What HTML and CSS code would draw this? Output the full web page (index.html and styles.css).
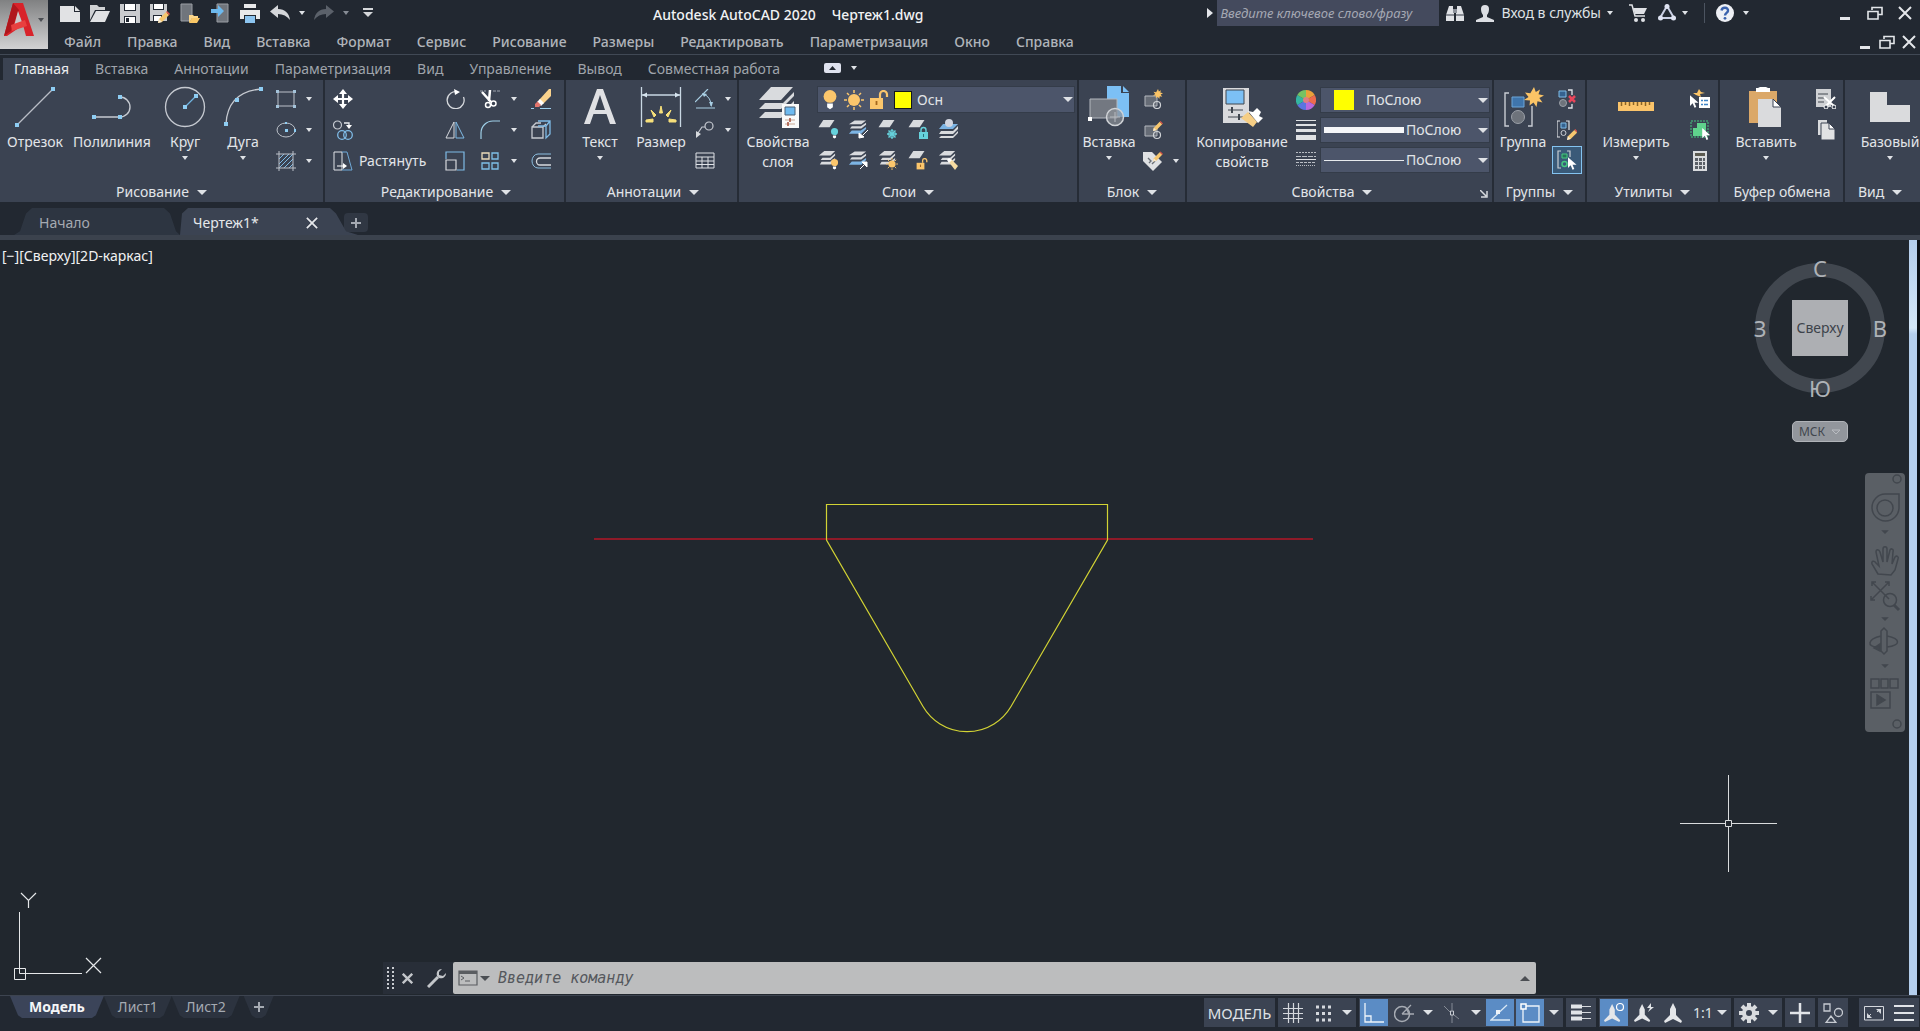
FILE: index.html
```html
<!DOCTYPE html>
<html lang="ru">

<head>
    <meta charset="UTF-8">
    <meta name="viewport" content="width=device-width, initial-scale=1.0">
    <title>Autodesk AutoCAD 2020 - Чертеж1.dwg</title>
    <link rel="stylesheet" href="styles.css">
</head>

<body>
    <!-- Shared icon shapes -->
    <svg class="sprite" aria-hidden="true">
        <symbol id="sheet" viewBox="0 0 10 5">
            <path d="M3 0H10L7 4.500H0Z" fill="#d9dbde" />
        </symbol>
        <symbol id="stack" viewBox="0 0 20 20">
            <path d="M7 1H19L14 6H1ZM5 8.500 3 11H14L19 6V4L13.500 8.500ZM4 13 2 16H14L19 11V9L13.500 13Z" fill="#d9dbde" />
        </symbol>
        <symbol id="stack-blue" viewBox="0 0 20 20">
            <path d="M7 1H19L14 5H1ZM4 7 2 9.500H14L19 5.500V3.500L13.500 7Z" fill="#d9dbde" />
            <path d="M4 11.500 1 15H14L19 10V8L13.500 11.500Z" fill="#7cb4e4" />
        </symbol>
        <symbol id="bulb" viewBox="0 0 10 14">
            <circle cx="5" cy="4.500" r="4.500" />
            <path d="M3 9.500H7V12L5 13.500 3 12Z" fill="#fff" />
        </symbol>
        <symbol id="sun" viewBox="0 0 20 20">
            <circle cx="10" cy="10" r="6" fill="#fbc66c" />
            <path d="M10 0V3M10 17V20M0 10H3M17 10H20M3 3 5 5M15 15 17 17M3 17 5 15M15 5 17 3" stroke="#fbc66c" stroke-width="1.500" />
        </symbol>
        <symbol id="unlock" viewBox="0 0 20 20">
            <path d="M1 8H14V19H1Z" fill="#fbc66c" />
            <path d="M11 8V4.500A3.500 3.500 0 0 1 18 4.500V7" fill="none" stroke="#fbc66c" stroke-width="2.200" />
            <path d="M7.500 11V15" stroke="#a5661c" stroke-width="1.800" />
        </symbol>
        <symbol id="pencil" viewBox="0 0 12 12">
            <path d="M0 12 1 8 8 1 11 4 4 11Z" fill="#f6c76f" />
            <path d="M8 1 9 0 12 3 11 4Z" fill="#e05548" />
            <path d="M0 12 1 8 4 11Z" fill="#f7ead0" />
        </symbol>
        <symbol id="pointer" viewBox="0 0 10 14">
            <path d="M0 0V12L3 9 5 14 7 13 5 8.500H9.500Z" fill="#fff" />
        </symbol>
        <symbol id="burst" viewBox="0 0 20 20">
            <path d="M10 0 11.800 5 16 2.500 14.500 7.200 20 8.500 15.300 11 18.500 15.500 13.500 14.300 12.500 20 9.500 15.500 5.500 18.500 6 13.500 0 13 4.500 10 1 5.500 6.300 6.300Z" fill="#fbc466" />
        </symbol>
        <symbol id="restore" viewBox="0 0 16 14">
            <path d="M5 4V1.500H15V8.500H11M1 5.500H11V13H1Z" fill="none" stroke="#e4e6ea" stroke-width="1.600" />
        </symbol>
        <symbol id="cross" viewBox="0 0 14 14">
            <path d="M1 1 13 13M13 1 1 13" stroke="currentColor" stroke-width="2" />
        </symbol>
        <symbol id="cross-bold" viewBox="0 0 14 14">
            <path d="M1 1 13 13M13 1 1 13" stroke="currentColor" stroke-width="3" />
        </symbol>
        <symbol id="plus" viewBox="0 0 10 10">
            <path d="M5 0V10M0 5H10" stroke="currentColor" stroke-width="2" />
        </symbol>
        <symbol id="annot" viewBox="0 0 20 20">
            <path d="M9 0 12 6V12L18 18 17 20 9 16 1 20 0 18 6 12V6Z" fill="#e4e6e9" />
        </symbol>
    </svg>

    <!-- Title bar and menu -->
    <header class="header">
        <button class="app-button" aria-label="Меню приложения">
            <svg width="30" height="36" viewBox="0 0 30 36">
                <path d="M9 1H19L30 34H22L19 23 3 34H0Z" fill="#d8232a" />
                <path d="M9 1 0 34 7 29 15 8Z" fill="#b0161c" />
                <path d="M14 9 18 20 10 24Z" fill="#c9c9ca" />
                <path d="M7 23 21 18 23 24 8 29Z" fill="#e8403f" />
            </svg>
            <span class="caret caret-dark"></span>
        </button>
        <div class="header-rows">
            <div class="title-row">
                <div class="quick-access">
                    <button aria-label="Создать"><svg class="ic" viewBox="0 0 20 20"><path d="M0 3H14V9H20V19H0Z" fill="#e1e2e4" /><path d="M15 3 20 8H15Z" fill="#e1e2e4" /></svg></button>
                    <button aria-label="Открыть"><svg class="ic" viewBox="0 0 20 20"><path d="M0 2H7L9 4H15V7H5L0 17Z" fill="#cfd1d4" /><path d="M6 8H20L15 19H0Z" fill="#e1e2e4" /></svg></button>
                    <button aria-label="Сохранить"><svg class="ic" viewBox="0 0 20 20"><path d="M0 1H20V20H0Z" fill="#c9cbce" /><path d="M4 1H16V8H4ZM4 13H16V20H4Z" fill="#222933" /><path d="M5 1H15V7H5ZM5 14H15V20H5Z" fill="#fff" /><path d="M6 15H9V19H6Z" fill="#222933" /></svg></button>
                    <button aria-label="Сохранить как"><svg class="ic" viewBox="0 0 20 20"><path d="M0 1H17V18H0Z" fill="#c9cbce" /><path d="M3 1H14V7H3ZM3 12H12V18H3Z" fill="#222933" /><path d="M4 1H13V6H4ZM4 13H11V18H4Z" fill="#fff" /><use href="#pencil" x="8" y="8" width="12" height="12" /></svg></button>
                    <button aria-label="Открыть из облака"><svg class="ic" viewBox="0 0 20 20"><path d="M1 1H12V18H1Z" fill="#70757c" stroke="#9a9ea4" /><path d="M9 12H13L14 13H18V15H12L9 20Z" fill="#fbd68a" /><path d="M12 15H20L17 20H9Z" fill="#f9c766" /></svg></button>
                    <button aria-label="Сохранить в облаке"><svg class="ic" viewBox="0 0 20 20"><path d="M7 1H18V19H7Z" fill="#70757c" stroke="#9a9ea4" /><path d="M1 6H8V2L14 8 8 14V10H1Z" fill="#6db9ee" /></svg></button>
                    <button aria-label="Печать"><svg class="ic" viewBox="0 0 20 20"><path d="M4 1H16V5H4ZM0 7H20V16H16V12H4V16H0Z" fill="#e8e9eb" /><path d="M5 13H15V20H5Z" fill="#8cc4f0" /></svg></button>
                    <button aria-label="Отменить"><svg class="ic" viewBox="0 0 20 20"><path d="M0 8.500 8 2V6C15 6 19 10 20 17 17 13 13 11 8 11V15Z" fill="#d5d7da" /></svg></button>
                    <button class="narrow" aria-label="Список отмен"><span class="caret"></span></button>
                    <button aria-label="Повторить"><svg class="ic" viewBox="0 0 20 20"><path d="M20 8.500 12 2V6C5 6 1 10 0 17 3 13 7 11 12 11V15Z" fill="#5b616a" /></svg></button>
                    <button class="narrow" aria-label="Список повторов"><span class="caret caret-dim"></span></button>
                    <button class="narrow qa-custom" aria-label="Настройка панели"><svg width="10" height="10" viewBox="0 0 10 10"><path d="M0 1H10" stroke="#d5d7da" stroke-width="2" /><path d="M0 4H10L5 9Z" fill="#d5d7da" /></svg></button>
                </div>
                <h1 class="title"><span>Autodesk AutoCAD 2020</span><span>Чертеж1.dwg</span></h1>
                <div class="info-center">
                    <button class="collapse" aria-label="Свернуть поиск"><svg width="6" height="10" viewBox="0 0 6 10"><path d="M0 0 6 5 0 10Z" fill="#e4e6ea" /></svg></button>
                    <input class="search" type="text" aria-label="Поиск" placeholder="Введите ключевое слово/фразу">
                    <button class="wide" aria-label="Найти"><svg class="ic" viewBox="0 0 20 20"><path d="M4 3H8V8L9 10V18H1V12ZM12 3H16L19 12V18H11V10L12 8Z" fill="#dfe1e5" /><path d="M8 6H12V10H8Z" fill="#8b9099" /><path d="M1 12H9M11 12H19" stroke="#343b47" /></svg></button>
                    <button class="sign-in"><svg class="ic" viewBox="0 0 20 20"><path d="M6 6A4 4 0 0 1 14 6C14 9 13 11 12 12V14L19 17V19H1V17L8 14V12C7 11 6 9 6 6Z" fill="#dcdee3" /></svg>Вход в службы<span class="caret"></span></button>
                    <button class="wide cart" aria-label="App Store"><svg class="ic" viewBox="0 0 20 20"><path d="M1 2H4L7 13H17" fill="none" stroke="#dfe1e5" stroke-width="1.500" /><path d="M5 5H19L16 11H7Z" fill="#dfe1e5" /><circle cx="8" cy="17" r="2" fill="#dfe1e5" /><circle cx="15" cy="17" r="2" fill="#dfe1e5" /></svg></button>
                    <button class="wide" aria-label="Autodesk App"><svg class="ic" viewBox="0 0 20 20"><path d="M10 3 3 15H17Z" fill="none" stroke="#c9cfe3" stroke-width="2" /><circle cx="10" cy="3.500" r="2.500" fill="#dfe3f2" /><circle cx="3.500" cy="15" r="2.500" fill="#dfe3f2" /><circle cx="16.500" cy="15" r="2.500" fill="#dfe3f2" /></svg><span class="caret"></span></button>
                    <button class="help" aria-label="Справка"><svg class="ic" viewBox="0 0 20 20"><circle cx="10" cy="10" r="9" fill="#eef0f5" /><path d="M6.500 7.500C7 3.500 13.500 4 13 7.800 12.700 9.800 10 10 10 12.500" fill="none" stroke="#3a62ad" stroke-width="2.400" /><circle cx="10" cy="15.300" r="1.400" fill="#3a62ad" /></svg><span class="caret"></span></button>
                    <div class="window-buttons">
                        <button aria-label="Свернуть"><span class="minimize"></span></button>
                        <button aria-label="Восстановить"><svg width="16" height="14"><use href="#restore" /></svg></button>
                        <button aria-label="Закрыть"><svg width="14" height="14"><use href="#cross" /></svg></button>
                    </div>
                </div>
            </div>
            <div class="menu-row">
                <nav class="menu">
                    <a href="#">Файл</a>
                    <a href="#">Правка</a>
                    <a href="#">Вид</a>
                    <a href="#">Вставка</a>
                    <a href="#">Формат</a>
                    <a href="#">Сервис</a>
                    <a href="#">Рисование</a>
                    <a href="#">Размеры</a>
                    <a href="#">Редактировать</a>
                    <a href="#">Параметризация</a>
                    <a href="#">Окно</a>
                    <a href="#">Справка</a>
                </nav>
                <div class="window-buttons doc-buttons">
                    <button aria-label="Свернуть чертеж"><span class="minimize"></span></button>
                    <button aria-label="Восстановить чертеж"><svg width="16" height="14"><use href="#restore" /></svg></button>
                    <button aria-label="Закрыть чертеж"><svg width="14" height="14"><use href="#cross" /></svg></button>
                </div>
            </div>
        </div>
    </header>

    <!-- Ribbon tabs -->
    <nav class="ribbon-tabs">
        <a class="active" href="#">Главная</a>
        <a href="#">Вставка</a>
        <a href="#">Аннотации</a>
        <a href="#">Параметризация</a>
        <a href="#">Вид</a>
        <a href="#">Управление</a>
        <a href="#">Вывод</a>
        <a href="#">Совместная работа</a>
        <button class="ribbon-min" aria-label="Свернуть ленту"><svg width="17" height="10" viewBox="0 0 17 10"><rect width="17" height="10" rx="2" fill="#dfe2ee" /><path d="M5 7 8.500 3 12 7Z" fill="#222831" /></svg><span class="caret"></span></button>
    </nav>

    <!-- Ribbon -->
    <div class="ribbon">
        <section class="panel panel-draw">
            <div class="panel-body">
                <button class="tool w70">
                    <svg class="ic-lg" viewBox="0 0 42 42"><path d="M3 39 39 3" stroke="#b9bec6" stroke-width="1.300" /><path d="M1 37H5V41H1ZM37 1H41V5H37Z" fill="#8ecdf3" /></svg>
                    Отрезок
                </button>
                <button class="tool w84">
                    <svg class="ic-lg" viewBox="0 0 42 42"><path d="M3 31H29A10 10 0 0 0 29 11" fill="none" stroke="#c6cad1" stroke-width="1.400" /><path d="M1 29H5V33H1ZM27 29H31V33H27ZM27 9H31V13H27Z" fill="#8ecdf3" /></svg>
                    Полилиния
                </button>
                <button class="tool w62">
                    <svg class="ic-lg" viewBox="0 0 42 42"><circle cx="21" cy="21" r="19.500" fill="none" stroke="#c6cad1" stroke-width="1.300" /><path d="M21 21 32 10" stroke="#6fb4e0" stroke-width="1.300" /><path d="M19 19H23V23H19ZM30 8H34V12H30Z" fill="#8ecdf3" /></svg>
                    Круг<span class="caret"></span>
                </button>
                <button class="tool w54">
                    <svg class="ic-lg" viewBox="0 0 42 42"><path d="M4 38C5 18 16 5 39 3" fill="none" stroke="#c6cad1" stroke-width="1.300" /><path d="M2 36H6V40H2ZM13 12H17V16H13ZM37 1H41V5H37Z" fill="#8ecdf3" /></svg>
                    Дуга<span class="caret"></span>
                </button>
                <div class="small-grid cols-2">
                    <button aria-label="Прямоугольник"><svg class="ic" viewBox="0 0 20 20"><path d="M2 3H18V17H2Z" fill="none" stroke="#bcc1c9" /><path d="M0 1H3V4H0ZM17 1H20V4H17ZM17 16H20V19H17ZM0 16H3V19H0Z" fill="#a4c3da" /></svg></button>
                    <button aria-label="Ещё прямоугольники"><span class="caret"></span></button>
                    <button aria-label="Эллипс"><svg class="ic" viewBox="0 0 20 20"><ellipse cx="10" cy="10" rx="9" ry="7" fill="none" stroke="#bcc1c9" /><path d="M9 9H12V12H9ZM9 2H11V4H9ZM18 9H20V12H18Z" fill="#8ecdf3" /></svg></button>
                    <button aria-label="Ещё эллипсы"><span class="caret"></span></button>
                    <button aria-label="Штриховка"><svg class="ic" viewBox="0 0 20 20"><path d="M3 8 8 3M3 13 13 3M3 17 17 3M8 17 17 8M13 17 17 13" stroke="#7fbbe6" /><path d="M3 0V20M17 0V20M0 3H20M0 17H20" stroke="#bcc1c9" /></svg></button>
                    <button aria-label="Ещё штриховки"><span class="caret"></span></button>
                </div>
            </div>
            <h2 class="panel-title">Рисование<span class="caret caret-lg"></span></h2>
        </section>

        <section class="panel panel-edit">
            <div class="panel-body">
                <div class="small-grid cols-edit">
                    <button class="labeled" aria-label="Перенести"><svg class="ic" viewBox="0 0 20 20"><path d="M10 3V17M3 10H17" stroke="#fff" stroke-width="2.200" /><path d="M10 0 14 5H6ZM10 20 6 15H14ZM0 10 5 6V14ZM20 10 15 14V6Z" fill="#fff" /></svg></button>
                    <button aria-label="Повернуть"><svg class="ic" viewBox="0 0 20 20"><path d="M13 3A8.500 8.500 0 1 0 18.500 8" fill="none" stroke="#d7dade" stroke-width="1.300" /><path d="M9 0 15 3 10 6Z" fill="#fff" /></svg></button>
                    <button aria-label="Обрезать"><svg class="ic" viewBox="0 0 20 20"><path d="M0 2H6M13 2H20" stroke="#9ea4ae" stroke-dasharray="3 1" /><path d="M2 3 11 13M10 1 9 12" stroke="#fff" stroke-width="2.500" /><circle cx="8" cy="16" r="2.500" fill="none" stroke="#fff" stroke-width="1.500" /><circle cx="13.500" cy="14.500" r="2.500" fill="none" stroke="#fff" stroke-width="1.500" /></svg></button>
                    <button aria-label="Ещё обрезка"><span class="caret"></span></button>
                    <button aria-label="Стереть"><svg class="ic" viewBox="0 0 20 20"><path d="M8 11 18 0H20V7L12 15Z" fill="#fad28c" /><path d="M6 13 9 10 13 14 10 17Z" fill="#fff" /><path d="M4 15 6.500 12.500 10 16 8 18H4Z" fill="#e2746c" /><path d="M0 19.500H3M9 19.500H20" stroke="#9fd0f0" /></svg></button>

                    <button class="labeled" aria-label="Копировать"><svg class="ic" viewBox="0 0 20 20"><circle cx="4.500" cy="5" r="4" fill="none" stroke="#c6cad1" stroke-width="1.200" /><path d="M11 3H16V6" fill="none" stroke="#e9ebee" stroke-width="1.300" /><path d="M13 5H19L16 9Z" fill="#fff" /><circle cx="9" cy="15" r="4.300" fill="none" stroke="#7fbbe6" stroke-width="1.300" /><circle cx="15" cy="15" r="4.300" fill="none" stroke="#7fbbe6" stroke-width="1.300" /></svg></button>
                    <button aria-label="Зеркало"><svg class="ic" viewBox="0 0 20 20"><path d="M9 2V18H1Z" fill="none" stroke="#d7dade" /><path d="M11 2V18H19Z" fill="none" stroke="#7fbbe6" /></svg></button>
                    <button aria-label="Сопряжение"><svg class="ic" viewBox="0 0 20 20"><path d="M1 19V13A12 12 0 0 1 13 1H20" fill="none" stroke="#9fd0e8" stroke-width="1.200" /></svg></button>
                    <button aria-label="Ещё сопряжение"><span class="caret"></span></button>
                    <button aria-label="Расчленить"><svg class="ic" viewBox="0 0 20 20"><path d="M1 7H12V18H1ZM1 7 5 3H10M12 7 15 4" fill="none" stroke="#c6cad1" stroke-width="1.300" /><path d="M7 1H19V14L15 18V6L19 1M15 6H7" fill="none" stroke="#7fbbe6" stroke-width="1.300" /></svg></button>

                    <button class="labeled"><svg class="ic" viewBox="0 0 20 20"><path d="M1 1H9V19H1Z" fill="none" stroke="#e1e4e8" /><path d="M9 1H14L19 19H9" fill="none" stroke="#6fa9d8" /><path d="M4 15H12" stroke="#fff" /><path d="M10 12 14 15 10 18Z" fill="#fff" /></svg>Растянуть</button>
                    <button aria-label="Масштаб"><svg class="ic" viewBox="0 0 20 20"><path d="M1 8V1H19V19H12" fill="none" stroke="#7fbbe6" stroke-width="1.200" /><path d="M1 9H11V19H1Z" fill="none" stroke="#d7dade" stroke-width="1.200" /></svg></button>
                    <button aria-label="Массив"><svg class="ic" viewBox="0 0 20 20"><path d="M2 2H9V8H2Z" fill="none" stroke="#ecdcbb" stroke-width="1.300" /><path d="M12 2H18V8H12ZM2 12H9V18H2ZM12 12H18V18H12Z" fill="none" stroke="#7fc0e8" stroke-width="1.300" /></svg></button>
                    <button aria-label="Ещё массивы"><span class="caret"></span></button>
                    <button aria-label="Подобие"><svg class="ic" viewBox="0 0 20 20"><path d="M20 3H7A6 7 0 0 0 7 17H20" fill="none" stroke="#8dbfe0" /><path d="M20 7H9A3.500 3.500 0 0 0 9 14H20" fill="none" stroke="#d7dade" stroke-width="1.300" /></svg></button>
                </div>
            </div>
            <h2 class="panel-title">Редактирование<span class="caret caret-lg"></span></h2>
        </section>

        <section class="panel panel-annot">
            <div class="panel-body">
                <button class="tool w62">
                    <svg class="ic-lg" viewBox="0 0 42 42"><path d="M5 38 18 3H24L37 38H31L27.500 28H14.500L11 38ZM16 24H26L21 9Z" fill="#dfe0e3" /></svg>
                    Текст<span class="caret"></span>
                </button>
                <button class="tool w60">
                    <svg class="ic-lg" viewBox="0 0 42 42"><path d="M1.500 1V41M40.500 1V41M2 9H40" stroke="#c9d8e4" stroke-width="1.300" /><path d="M2 9 7 6.500V11.500ZM40 9 35 6.500V11.500Z" fill="#d5e3ee" /><path d="M21 20 22.500 27H19.500ZM11 24 16 29 14 31ZM31 24 28 31 26 29ZM6 34 13 33V36H6ZM36 34V36H29V33Z" fill="#f7e07a" stroke="#f7e07a" /></svg>
                    Размер
                </button>
                <div class="small-grid cols-2">
                    <button aria-label="Угловой размер"><svg class="ic" viewBox="0 0 20 20"><path d="M0 13 13 0M1 19H20" stroke="#a9cfe4" stroke-width="1.200" /><path d="M9 5A13 13 0 0 1 16 17" fill="none" stroke="#a9cfe4" /><path d="M7 4 12 5 9 8ZM14 13H18L16.500 18Z" fill="#a9cfe4" /></svg></button>
                    <button aria-label="Ещё размеры"><span class="caret"></span></button>
                    <button aria-label="Выноска"><svg class="ic" viewBox="0 0 20 20"><circle cx="14" cy="6" r="4" fill="none" stroke="#c6cad1" stroke-width="1.200" /><path d="M10 7H7L3 13" fill="none" stroke="#c6cad1" stroke-width="1.200" /><path d="M1 18V11L6 14Z" fill="#d7dade" /></svg></button>
                    <button aria-label="Ещё выноски"><span class="caret"></span></button>
                    <button aria-label="Таблица"><svg class="ic" viewBox="0 0 20 20"><path d="M1 2H19V17H1ZM1 6H19M1 10H19M1 13.500H19M7 6V17M13 6V17" fill="none" stroke="#dfe2e6" /></svg></button>
                </div>
            </div>
            <h2 class="panel-title">Аннотации<span class="caret caret-lg"></span></h2>
        </section>

        <section class="panel panel-layers">
            <div class="panel-body">
                <button class="tool w78">
                    <svg class="ic-lg" viewBox="0 0 42 42"><path d="M14 1H36L24 14H2ZM8 17 2 23H24L37 10V6L26 17ZM8 26 2 32H24L37 19V15L26 26Z" fill="#d9dbde" /><path d="M25 18H42V42H25Z" fill="#fafafa" /><path d="M28 21H38V29H28Z" fill="#6ebaf0" stroke="#4b6076" /><path d="M28 34H38M28 38H38" stroke="#c9a894" /><path d="M33 32V36M31 36V40" stroke="#a54f3c" stroke-width="1.500" /></svg>
                    Свойства слоя
                </button>
                <div class="layer-tools">
                    <div class="combo layer-combo">
                        <svg width="18" height="20" viewBox="0 0 10 14" fill="#fbc66c"><use href="#bulb" /></svg>
                        <svg class="ic"><use href="#sun" /></svg>
                        <svg class="ic"><use href="#unlock" /></svg>
                        <span class="swatch swatch-sm"></span>
                        <select aria-label="Слой"><option>Осн</option></select>
                        <span class="caret caret-lg"></span>
                    </div>
                    <div class="layer-grid">
                        <button aria-label="Отключить"><svg class="ic" viewBox="0 0 20 20"><use href="#sheet" x="0" y="1" width="17" height="8" /><use href="#bulb" x="12" y="9" width="9" height="11" fill="#66d2dc" /></svg></button>
                        <button aria-label="Изолировать"><svg class="ic" viewBox="0 0 20 20"><use href="#stack-blue" width="19" height="20" /><path d="M20 11 15 16M11 19V14L16 18Z" stroke="#fff" fill="#fff" /></svg></button>
                        <button aria-label="Заморозить"><svg class="ic" viewBox="0 0 20 20"><use href="#sheet" x="0" y="1" width="17" height="8" /><path d="M14 10V20M9 15H19M10.500 11.500 17.500 18.500M17.500 11.500 10.500 18.500" stroke="#66d2dc" stroke-width="1.300" /><circle cx="14" cy="15" r="3.500" fill="none" stroke="#66d2dc" /></svg></button>
                        <button aria-label="Блокировать"><svg class="ic" viewBox="0 0 20 20"><use href="#sheet" x="0" y="1" width="17" height="8" /><path d="M11 13H20V20H11Z" fill="#66d2dc" /><path d="M13 13V11A2.500 2.500 0 0 1 18 11V13" fill="none" stroke="#66d2dc" stroke-width="1.400" /><path d="M15.500 15V18" stroke="#26717b" /></svg></button>
                        <button aria-label="Сделать текущим"><svg class="ic" viewBox="0 0 20 20"><path d="M5 5H20L15 10H1Z" fill="#7cb4e4" /><path d="M3 12H15L20 7V10L15 15H1ZM3 17H15L20 12V14L15 19H1Z" fill="#d9dbde" /><circle cx="11" cy="4" r="4" fill="#d3d6e0" /></svg></button>
                        <button aria-label="Включить все"><svg class="ic" viewBox="0 0 20 20"><use href="#stack" width="18" height="18" /><use href="#bulb" x="12" y="9" width="9" height="11" fill="#fbc66c" /></svg></button>
                        <button aria-label="Отменить изоляцию"><svg class="ic" viewBox="0 0 20 20"><use href="#stack-blue" width="19" height="20" /><path d="M12 19 17 14M14 12H19V17Z" stroke="#fff" fill="#fff" /></svg></button>
                        <button aria-label="Разморозить все"><svg class="ic" viewBox="0 0 20 20"><use href="#stack" width="18" height="18" /><use href="#sun" x="8" y="8" width="12" height="12" /></svg></button>
                        <button aria-label="Разблокировать"><svg class="ic" viewBox="0 0 20 20"><use href="#sheet" x="0" y="1" width="17" height="8" /><use href="#unlock" x="8" y="8" width="12" height="12" /></svg></button>
                        <button aria-label="Копировать свойства слоя"><svg class="ic" viewBox="0 0 20 20"><use href="#stack" width="18" height="18" /><path d="M10 11 13 9 20 16 17 20Z" fill="#f7dca2" /><path d="M9 10 11 8 14 10 11 13Z" fill="#fff" /></svg></button>
                    </div>
                </div>
            </div>
            <h2 class="panel-title">Слои<span class="caret caret-lg"></span></h2>
        </section>

        <section class="panel panel-block">
            <div class="panel-body">
                <button class="tool w60">
                    <svg class="ic-lg" viewBox="0 0 42 42"><path d="M19 0H33V7H41V31H19Z" fill="#7cc0f5" /><path d="M35 0 41 6H35Z" fill="#7cc0f5" /><path d="M2 13H29V32H2Z" fill="#737881" stroke="#b4b8be" /><circle cx="27" cy="31" r="8.500" fill="#8b9097" fill-opacity=".7" stroke="#d0d3d7" stroke-width="1.500" /><path d="M27 26V36M22 31H32" stroke="#b6babf" /><path d="M0 31H4V35H0Z" fill="#fff" /></svg>
                    Вставка<span class="caret"></span>
                </button>
                <div class="small-grid cols-2">
                    <button aria-label="Создать блок"><svg class="ic" viewBox="0 0 20 20"><path d="M2 7H14V17H2Z" fill="#666c76" stroke="#b4b8be" /><circle cx="14" cy="16" r="3.500" fill="none" stroke="#d0d3d7" stroke-width="1.200" /><use href="#burst" x="10" y="0" width="10" height="10" /></svg></button>
                    <span></span>
                    <button aria-label="Редактор блоков"><svg class="ic" viewBox="0 0 20 20"><path d="M2 6H14V16H2Z" fill="#666c76" stroke="#b4b8be" /><circle cx="14" cy="15" r="3.500" fill="none" stroke="#d0d3d7" stroke-width="1.200" /><use href="#pencil" x="10" y="1" width="10" height="10" /></svg></button>
                    <span></span>
                    <button aria-label="Атрибуты"><svg class="ic" viewBox="0 0 20 20"><path d="M0 1H9L19 11 10 20 0 10Z" fill="#dfe1e3" /><path d="M5 7 8 10 6 12M9 13 12 10" fill="none" stroke="#6a7078" stroke-width="1.400" /><use href="#pencil" x="10" y="0" width="10" height="11" /></svg></button>
                    <button aria-label="Ещё атрибуты"><span class="caret"></span></button>
                </div>
            </div>
            <h2 class="panel-title">Блок<span class="caret caret-lg"></span></h2>
        </section>

        <section class="panel panel-props">
            <div class="panel-body">
                <button class="tool w108">
                    <svg class="ic-lg" viewBox="0 0 42 42"><path d="M2 2H28V37H2Z" fill="#d9dadd" /><path d="M5 4H23V18H5Z" fill="#7cc0f5" stroke="#40464f" /><path d="M7 24H22M7 31H22" stroke="#40464f" /><path d="M11 21V27M18 28V34" stroke="#40464f" stroke-width="2" /><path d="M20 32 27 26 36 36 32 41Z" fill="#f6ce85" /><path d="M27 25 32 26 36 22 40 26 38 30 42 32 37 37Z" fill="#fff" /></svg>
                    Копирование свойств
                </button>
                <div class="prop-rows">
                    <div class="prop-row">
                        <svg class="ic" viewBox="0 0 20 20"><path d="M10 10V0A10 10 0 0 1 18.700 5Z" fill="#e9a13a" /><path d="M10 10 18.700 5A10 10 0 0 1 18.700 15Z" fill="#ee6b4d" /><path d="M10 10 18.700 15A10 10 0 0 1 10 20Z" fill="#b968dc" /><path d="M10 10V20A10 10 0 0 1 1.300 15Z" fill="#5b74e0" /><path d="M10 10 1.300 15A10 10 0 0 1 1.300 5Z" fill="#34b5a1" /><path d="M10 10 1.300 5A10 10 0 0 1 10 0Z" fill="#76c263" /><circle cx="10" cy="10" r="3" fill="#de7f82" /></svg>
                        <div class="combo">
                            <span class="swatch"></span>
                            <select aria-label="Цвет"><option>ПоСлою</option></select>
                            <span class="caret caret-lg"></span>
                        </div>
                    </div>
                    <div class="prop-row">
                        <svg class="ic" viewBox="0 0 20 20"><path d="M0 0H20V1H0ZM0 4H20V6H0ZM0 9H20V12H0ZM0 15H20V20H0Z" fill="#dfe1e4" /></svg>
                        <div class="combo">
                            <span class="line-sample thick"></span>
                            <select aria-label="Вес линий"><option>ПоСлою</option></select>
                            <span class="caret caret-lg"></span>
                        </div>
                    </div>
                    <div class="prop-row">
                        <svg class="ic" viewBox="0 0 20 20"><path d="M0 2.500H20" stroke="#b9bdc4" stroke-dasharray="2 1" /><path d="M0 6.500H20" stroke="#b9bdc4" stroke-dasharray="5 1" /><path d="M0 9.500H20" stroke="#dfe1e4" /><path d="M0 12.500H20" stroke="#b9bdc4" stroke-dasharray="3 1" /><path d="M0 15.500H20" stroke="#b9bdc4" stroke-dasharray="1 1" /></svg>
                        <div class="combo">
                            <span class="line-sample"></span>
                            <select aria-label="Тип линий"><option>ПоСлою</option></select>
                            <span class="caret caret-lg"></span>
                        </div>
                    </div>
                </div>
            </div>
            <h2 class="panel-title">Свойства<span class="caret caret-lg"></span><button class="launcher" aria-label="Палитра свойств"><svg width="8" height="8" viewBox="0 0 8 8"><path d="M0 0 6 6M7 1V7H1" fill="none" stroke="#d7dade" stroke-width="1.500" /></svg></button></h2>
        </section>

        <section class="panel panel-groups">
            <div class="panel-body">
                <button class="tool w58">
                    <svg class="ic-lg" viewBox="0 0 42 42"><path d="M7 7H3V40H7M26 40H30V20" fill="none" stroke="#c9cdd3" stroke-width="1.400" /><path d="M10 11H22V21H10Z" fill="#3f75ac" stroke="#6da6d8" /><circle cx="16" cy="31" r="6.500" fill="#6e737b" stroke="#9a9fa7" /><use href="#burst" x="22" y="1" width="20" height="20" /></svg>
                    Группа
                </button>
                <div class="small-grid cols-1">
                    <button aria-label="Разгруппировать"><svg class="ic" viewBox="0 0 20 20"><path d="M2 2H9V8H2Z" fill="#35628f" stroke="#7fbbe6" /><circle cx="6" cy="14" r="3.500" fill="#6e737b" stroke="#9a9fa7" /><path d="M11 1H15V6M15 15V19H11" fill="none" stroke="#e1e4e8" stroke-width="1.300" /><path d="M12 7 18 13M18 7 12 13" stroke="#e8455a" stroke-width="2.500" /></svg></button>
                    <button aria-label="Изменить группу"><svg class="ic" viewBox="0 0 20 20"><path d="M3 1H0V17H3M9 1H12V10" fill="none" stroke="#e1e4e8" stroke-width="1.200" /><path d="M4 3H9V8H4Z" fill="#35628f" stroke="#7fbbe6" /><circle cx="6.500" cy="13" r="2.500" fill="none" stroke="#c9cdd3" /><use href="#pencil" x="10" y="9" width="11" height="11" /></svg></button>
                    <button class="pressed" aria-label="Выбор группы"><svg class="ic" viewBox="0 0 20 20"><path d="M4 1H1V18H4M10 1H13V7" fill="none" stroke="#c9cdd3" stroke-width="1.200" /><path d="M5 4H10V8H5Z" fill="#27745a" stroke="#46c880" /><circle cx="7.500" cy="14" r="2.500" fill="none" stroke="#46c880" stroke-width="1.500" /><use href="#pointer" x="11" y="7" width="9" height="13" /></svg></button>
                </div>
            </div>
            <h2 class="panel-title">Группы<span class="caret caret-lg"></span></h2>
        </section>

        <section class="panel panel-utils">
            <div class="panel-body">
                <button class="tool w98">
                    <svg class="ic-lg" viewBox="0 0 42 42"><path d="M3 16H39V25H3Z" fill="#fbc46a" /><path d="M6.500 16V20M10.500 16V19M14.500 16V20M18.500 16V19M22.500 16V20M26.500 16V19M30.500 16V20M34.500 16V19" stroke="#8a6326" stroke-width="1.500" /></svg>
                    Измерить<span class="caret"></span>
                </button>
                <div class="small-grid cols-1">
                    <button aria-label="Быстрый выбор"><svg class="ic" viewBox="0 0 20 20"><path d="M9 0 7 4 3 4 6 6 11 8 10 5 15 4 11 3Z" fill="#fbc466" /><use href="#pointer" x="0" y="6" width="9" height="13" /><path d="M9 8H20V19H9Z" fill="#fff" /><path d="M11 11.500H13M14 11.500H18M11 15.500H13M14 15.500H18" stroke="#3f84c6" stroke-width="1.500" /></svg></button>
                    <button aria-label="Выбрать все"><svg class="ic" viewBox="0 0 20 20"><path d="M1 1H18V17H1Z" fill="none" stroke="#46c880" stroke-dasharray="2 1" /><path d="M7 3H16V12H13V16H3V8H7Z" fill="#5fd38c" /><use href="#pointer" x="12" y="8" width="9" height="12" /></svg></button>
                    <button aria-label="Калькулятор"><svg class="ic" viewBox="0 0 20 20"><path d="M3 0H17V20H3Z" fill="#d9dbde" /><path d="M5 2H15V5H5Z" fill="#5b5a50" /><path d="M5 7H8V10H5ZM9 7H12V10H9ZM13 7H15V10H13ZM5 11H8V14H5ZM9 11H12V14H9ZM13 11H15V14H13ZM5 15H8V18H5ZM9 15H12V18H9ZM13 15H15V18H13Z" fill="#5a5f66" /></svg></button>
                </div>
            </div>
            <h2 class="panel-title">Утилиты<span class="caret caret-lg"></span></h2>
        </section>

        <section class="panel panel-clip">
            <div class="panel-body">
                <button class="tool w90">
                    <svg class="ic-lg" viewBox="0 0 42 42"><path d="M4 5H32V37H4Z" fill="#dba868" /><path d="M11 2H13L15 1H21L23 2H25V6H11Z" fill="#fff" /><path d="M13 13H28L36 21V41H13Z" fill="#dadbdd" /><path d="M28 13 36 21H28Z" fill="#fff" stroke="#3b4352" /></svg>
                    Вставить<span class="caret"></span>
                </button>
                <div class="small-grid cols-1">
                    <button aria-label="Вырезать"><svg class="ic" viewBox="0 0 20 20"><path d="M0 0H15V18H0Z" fill="#cfd1d4" /><path d="M2 5H12M2 9H10M2 13H8" stroke="#41474f" /><path d="M8 8 18 17M19 8 10 17" stroke="#fff" stroke-width="2" /><circle cx="10" cy="18" r="2" fill="#3b4352" stroke="#fff" /><circle cx="18" cy="18" r="2" fill="#3b4352" stroke="#fff" /></svg></button>
                    <button aria-label="Копировать в буфер"><svg class="ic" viewBox="0 0 20 20"><path d="M2 0H11V15H2Z" fill="#d9dbde" /><path d="M5 3H14L19 8V20H5Z" fill="#e1e2e4" stroke="#3b4352" /><path d="M13 3 19 9H13Z" fill="#fff" stroke="#3b4352" /></svg></button>
                </div>
            </div>
            <h2 class="panel-title">Буфер обмена</h2>
        </section>

        <section class="panel panel-view">
            <div class="panel-body">
                <button class="tool w90">
                    <svg class="ic-lg" viewBox="0 0 42 42"><path d="M1 6H18V19H41V36H1Z" fill="#dadbdd" /></svg>
                    Базовый<span class="caret"></span>
                </button>
            </div>
            <h2 class="panel-title">Вид<span class="caret caret-lg"></span></h2>
        </section>
    </div>

    <!-- Drawing file tabs -->
    <div class="file-tabs">
        <button class="file-tab">Начало</button>
        <div class="file-tab active"><span>Чертеж1*</span><button aria-label="Закрыть вкладку"><svg width="12" height="12"><use href="#cross" /></svg></button></div>
        <button class="add-tab" aria-label="Новый чертеж"><svg width="10" height="10"><use href="#plus" /></svg></button>
    </div>

    <!-- Drawing area -->
    <main class="canvas">
        <div class="view-label">[−][Сверху][2D-каркас]</div>

        <svg class="drawing" width="720" height="232" viewBox="0 0 720 232" fill="none">
            <path d="M0 36H719" stroke="#8e1a28" stroke-width="2" />
            <path d="M232.500 37V1.500H513.500V37L417 203.500A51 51 0 0 1 329 203.500Z" stroke="#d2d334" stroke-width="1.200" />
        </svg>

        <svg class="crosshair" width="98" height="98" viewBox="0 0 98 98" fill="none" stroke="#d9dbdd">
            <path d="M48.500 0V46M48.500 52V97M0 48.500H46M52 48.500H97M45.500 45.500H51.500V51.500H45.500Z" />
        </svg>

        <svg class="ucs" width="100" height="96" viewBox="0 0 100 96" fill="none" stroke="#e6e8ea">
            <path d="M7.500 25V86.500H70M2.500 81.500H13.500V92.500H2.500Z" />
            <path d="M9 6 16.500 13.500 24 6M16.500 13.500V21M74 71 89 86M89 71 74 86" stroke-width="1.200" />
        </svg>

        <div class="viewcube">
            <div class="compass">
                <span class="north">С</span>
                <span class="west">З</span>
                <button class="cube-face">Сверху</button>
                <span class="east">В</span>
                <span class="south">Ю</span>
            </div>
            <button class="wcs">МСК<svg width="10" height="6" viewBox="0 0 10 6"><path d="M1 1H9L5 5Z" fill="none" stroke="#b9bcc1" /></svg></button>
        </div>

        <div class="navbar">
            <svg width="40" height="259" viewBox="0 0 40 259" fill="none" stroke="#42474e" stroke-width="1.500">
                <circle cx="32" cy="6" r="4" />
                <path d="M20 21H34V35A13.500 13.500 0 1 1 20 21Z" />
                <circle cx="20" cy="35" r="8" />
                <path d="M13 101 7 91C6 88 9 87 11 90L14 93 11 79C11 76 14 76 15 79L18 89V76C18 73 22 73 22 76V89L25 77C26 75 29 76 28 79L27 91 30 84C32 82 34 84 33 86L30 97 26 102Z" />
                <path d="M7 109 24 126M24 109 6 127M7 113V109H11M20 109H24V113M6 123V127H10" />
                <circle cx="25" cy="127" r="6.500" />
                <path d="M29 132 34 137" stroke-width="3" />
                <path d="M16 158 19 155 22 158V178L19 181 16 178ZM16 163C2 166 2 174 12 174M22 163C36 166 36 172 22 174" />
                <path d="M15 171V178L9 175Z" fill="#42474e" />
                <path d="M6 206H14V215H6ZM16 206H23V215H16ZM25 206H33V215H25ZM6 219H25V235H6Z" />
                <path d="M12 222 20 227 12 232Z" fill="#42474e" />
                <path d="M18 58H22L20 60ZM18 145H22L20 147ZM18 192H22L20 194Z" fill="#42474e" />
                <circle cx="32" cy="251" r="4" />
            </svg>
        </div>

        <div class="scroll-edge"></div>

        <div class="command-line">
            <div class="command-handle">
                <svg width="7" height="22" viewBox="0 0 7 22"><path d="M1 0V22M6 0V22" stroke="#c9ccd1" stroke-width="2" stroke-dasharray="2 2" /></svg>
                <button aria-label="Закрыть командную строку"><svg width="11" height="11"><use href="#cross-bold" /></svg></button>
                <button aria-label="Адаптация"><svg width="19" height="19" viewBox="0 0 19 19"><path d="M1 18 11 8" stroke="#c3c6ca" stroke-width="3" /><path d="M15 0C11 0 9 3 10 7L12 9C16 10 19 8 19 4L16 7 12 6 12 3Z" fill="#c3c6ca" /></svg></button>
            </div>
            <div class="command-box">
                <button class="recent" aria-label="Последние команды"><svg width="20" height="16" viewBox="0 0 20 16"><path d="M1 1H19V15H1Z" fill="none" stroke="#5a5d61" stroke-width="1.200" /><path d="M1 1H19V4H1Z" fill="#5a5d61" /><path d="M3 6 6 8 3 10M7 11H12" fill="none" stroke="#5a5d61" /></svg><span class="caret caret-lg caret-dark"></span></button>
                <input type="text" aria-label="Команда" placeholder="Введите команду">
                <button class="history" aria-label="История команд"><svg width="10" height="5" viewBox="0 0 10 5"><path d="M0 5 5 0 10 5Z" fill="#4b4e53" /></svg></button>
            </div>
        </div>
    </main>

    <!-- Layout tabs and status bar -->
    <footer class="footer">
        <div class="layout-tabs">
            <button class="layout-tab active">Модель</button>
            <button class="layout-tab">Лист1</button>
            <button class="layout-tab">Лист2</button>
            <button class="layout-tab layout-add" aria-label="Новый лист"><svg width="10" height="10"><use href="#plus" /></svg></button>
        </div>
        <div class="status">
            <div class="status-group"><button class="status-model">МОДЕЛЬ</button></div>
            <div class="status-group">
                <button aria-label="Сетка"><svg class="ic" viewBox="0 0 20 20"><path d="M5.500 0V20M10.500 0V20M15.500 0V20M0 5.500H20M0 10.500H20M0 15.500H20" stroke="#d5d8dd" stroke-width="1.200" /></svg></button>
                <button aria-label="Шаг"><svg class="ic" viewBox="0 0 20 20"><path d="M3 4H18M3 10.500H18M3 17H18" stroke="#d5d8dd" stroke-width="3" stroke-dasharray="3 3" /></svg></button>
                <button class="drop" aria-label="Параметры шага"><span class="caret caret-lg"></span></button>
            </div>
            <div class="status-group">
                <button class="on" aria-label="Орто"><svg class="ic" viewBox="0 0 20 20"><path d="M1 0V19H20M1 13H7V19" fill="none" stroke="#eef4fa" stroke-width="1.300" /></svg></button>
                <button aria-label="Полярное отслеживание"><svg class="ic" viewBox="0 0 20 20"><circle cx="8" cy="11" r="7.500" fill="none" stroke="#a6abb3" stroke-width="1.500" /><path d="M8 11H20M8 11 17 2M13 7 15 11" fill="none" stroke="#a6abb3" stroke-width="1.300" /></svg></button>
                <button class="drop" aria-label="Углы"><span class="caret caret-lg"></span></button>
                <button aria-label="Изометрия"><svg class="ic" viewBox="0 0 20 20"><path d="M10 0V7M10 12V20M2 3 8 9M12 12 17 16" stroke="#858b95" /><path d="M8.500 8H11.500V12H8.500Z" fill="none" stroke="#c9cdd3" /></svg></button>
                <button class="drop" aria-label="Параметры изометрии"><span class="caret caret-lg"></span></button>
                <button class="on" aria-label="Объектное отслеживание"><svg class="ic" viewBox="0 0 20 20"><path d="M17 2 1 17H20" fill="none" stroke="#d9e8f5" stroke-width="1.300" /><path d="M6 7H10V11H6Z" fill="#eef4fa" /></svg></button>
                <button class="on" aria-label="Объектная привязка"><svg class="ic" viewBox="0 0 20 20"><path d="M6 3H19V19H3V6" fill="none" stroke="#eef4fa" stroke-width="1.300" /><path d="M1 1H6V6H1Z" fill="none" stroke="#fff" stroke-width="1.500" /></svg></button>
                <button class="drop" aria-label="Параметры привязки"><span class="caret caret-lg"></span></button>
            </div>
            <div class="status-group"><button aria-label="Вес линий на экране"><svg class="ic" viewBox="0 0 20 20"><path d="M0 3.500H20M0 9.500H20M0 15.500H20" stroke="#d5d8dd" /><path d="M0 3.500H11M0 9.500H11M0 15.500H11" stroke="#e1e4e8" stroke-width="4" /></svg></button></div>
            <div class="status-group">
                <button class="on" aria-label="Видимость аннотаций"><svg class="ic" viewBox="0 0 20 20"><use href="#annot" width="18" height="20" /><circle cx="16" cy="4" r="3.500" fill="none" stroke="#fff" stroke-width="1.200" /></svg></button>
                <button aria-label="Автомасштаб"><svg class="ic" viewBox="0 0 20 20"><use href="#annot" width="18" height="20" /><path d="M17 0 13 5H16L14 9 20 4H17Z" fill="#e1e4e8" /></svg></button>
                <button aria-label="Масштаб аннотаций"><svg class="ic"><use href="#annot" /></svg></button>
                <button class="scale">1:1<span class="caret caret-lg"></span></button>
            </div>
            <div class="status-group">
                <button aria-label="Рабочее пространство"><svg class="ic" viewBox="0 0 20 20"><path d="M10 0V20M0 10H20M3 3 17 17M17 3 3 17" stroke="#d9dbde" stroke-width="4" /><circle cx="10" cy="10" r="5" fill="#3b4352" stroke="#d9dbde" stroke-width="4" /></svg></button>
                <button class="drop" aria-label="Список пространств"><span class="caret caret-lg"></span></button>
            </div>
            <div class="status-group"><button aria-label="Монитор аннотаций"><svg class="ic" viewBox="0 0 20 20"><path d="M10 0V20M0 10H20" stroke="#e1e4e8" stroke-width="2.500" /></svg></button></div>
            <div class="status-group status-last-tool"><button aria-label="Изоляция объектов"><svg class="ic" viewBox="0 0 20 20"><path d="M1 1H7V8H1ZM8 13 3 19.500H13Z" fill="none" stroke="#c6cad1" stroke-width="1.300" /><circle cx="15.500" cy="9.500" r="4" fill="none" stroke="#c6cad1" stroke-width="1.300" /></svg></button></div>
            <div class="status-group">
                <button aria-label="Очистить экран"><svg class="ic" viewBox="0 0 20 20"><path d="M.5 3.500H19.500V17H.5Z" fill="none" stroke="#d5d8dd" /><path d="M12 6H17V11ZM3 10V15H8Z" fill="#d5d8dd" /><path d="M13 9 15 7M5 13 7 11" stroke="#d5d8dd" /></svg></button>
                <button aria-label="Адаптация строки состояния"><svg class="ic" viewBox="0 0 20 20"><path d="M0 3H20M0 10H20M0 17H20" stroke="#e1e4e8" stroke-width="2.200" /></svg></button>
            </div>
        </div>
    </footer>
</body>

</html>
```
FILE: styles.css
```css
* {
    box-sizing: border-box;
}

body {
    display: flex;
    flex-direction: column;
    height: 100vh;
    margin: 0;
    overflow: hidden;
    background: #222831;
    color: #dfe2e6;
    font-family: "Noto Sans", "Open Sans", sans-serif;
    font-size: 14px;
    line-height: 20px;
}

button,
input,
select {
    margin: 0;
    padding: 0;
    border: 0;
    background: none;
    color: inherit;
    font: inherit;
}

button {
    display: flex;
    align-items: center;
    justify-content: center;
    cursor: pointer;
    white-space: nowrap;
}

a {
    color: inherit;
    text-decoration: none;
}

h1,
h2 {
    margin: 0;
    font-size: 14px;
    font-weight: normal;
}

svg {
    display: block;
    flex: none;
}

.sprite {
    display: none;
}

.ic {
    width: 20px;
    height: 20px;
}

.ic-lg {
    width: 42px;
    height: 42px;
}

.caret {
    flex: none;
    border: 3px solid transparent;
    border-top: 4px solid #dfe2e6;
    border-bottom: 0;
}

.caret-lg {
    border-width: 5px 5px 0;
}

.caret-dim {
    border-top-color: #878c95;
}

.caret-dark {
    border-top-color: #4b4e53;
}

/* Title bar and menu */
.header {
    display: flex;
    flex: none;
    height: 55px;
    border-bottom: 1px solid #414955;
}

.app-button {
    gap: 4px;
    width: 48px;
    height: 49px;
    padding-bottom: 10px;
    background: linear-gradient(#808182, #d2d2d3);
}

.header-rows {
    display: flex;
    flex: 1;
    flex-direction: column;
    min-width: 0;
}

.title-row,
.menu-row {
    display: flex;
    align-items: center;
    justify-content: space-between;
    height: 26px;
}

.menu-row {
    height: 28px;
    padding-top: 4px;
}

.quick-access,
.info-center,
.window-buttons {
    display: flex;
    align-items: center;
}

.quick-access {
    padding-left: 7px;
}

.quick-access button {
    width: 30px;
    height: 26px;
}

.quick-access .narrow {
    width: 14px;
}

.quick-access .qa-custom {
    width: 30px;
}

.title {
    display: flex;
    flex: 1;
    justify-content: center;
    gap: 16px;
    padding: 4px 10px 0 0;
    color: #f1f2f4;
    font-weight: 500;
    white-space: nowrap;
}

.collapse {
    width: 14px;
    height: 26px;
}

.search {
    width: 222px;
    height: 26px;
    padding: 0 3px;
    background: #444a5d;
    font-size: 13px;
    font-style: italic;
}

.search::placeholder {
    color: #a4a8b3;
    opacity: 1;
}

.wide {
    gap: 5px;
    min-width: 32px;
    height: 26px;
}

.cart {
    min-width: 36px;
}

.sign-in {
    gap: 6px;
    padding: 0 7px 0 4px;
}

.help {
    gap: 8px;
    margin-left: 16px;
    padding-left: 10px;
    border-left: 1px solid #4c5460;
}

.window-buttons button {
    width: 30px;
    height: 24px;
    color: #e4e6ea;
}

.window-buttons {
    padding-left: 81px;
}

.minimize {
    width: 10px;
    height: 3px;
    margin-top: 10px;
    background: #e4e6ea;
}

.doc-buttons button {
    width: 22px;
}

.menu {
    display: flex;
    gap: 26px;
    padding-left: 16px;
    color: #b0b4ba;
    font-weight: 500;
}

/* Ribbon tabs */
.ribbon-tabs {
    display: flex;
    flex: none;
    gap: 4px;
    height: 25px;
    padding: 3px 3px 0;
    color: #9fa4ab;
    line-height: 22px;
}

.ribbon-tabs a {
    padding: 0 11px;
}

.ribbon-tabs .active {
    background: #3b4352;
    color: #eceef0;
}

.ribbon-min {
    gap: 10px;
    height: 19px;
    padding-left: 29px;
}

/* Ribbon panels */
.ribbon {
    display: flex;
    flex: none;
    height: 122px;
    overflow: hidden;
    background: #3b4352;
}

.panel {
    display: flex;
    flex: none;
    flex-direction: column;
    border-right: 2px solid #262c36;
    color: #e2e5e9;
}

.panel-draw {
    width: 325px;
}

.panel-edit {
    width: 241px;
    padding-left: 3px;
}

.panel-annot {
    width: 173px;
    padding-left: 3px;
}

.panel-layers {
    width: 340px;
}

.panel-block {
    width: 108px;
}

.panel-props {
    width: 307px;
    padding-left: 1px;
}

.panel-groups {
    width: 93px;
}

.panel-utils {
    width: 133px;
}

.panel-clip {
    width: 125px;
    padding-left: 1px;
}

.panel-view {
    flex: 1 0 auto;
    border-right: 0;
}

.panel-body {
    display: flex;
    flex: 1;
}

.panel-title {
    display: flex;
    align-items: center;
    justify-content: center;
    gap: 8px;
    height: 20px;
    white-space: nowrap;
}

.panel-view .panel-title {
    justify-content: flex-start;
    padding-left: 13px;
}

.tool {
    flex: none;
    flex-direction: column;
    justify-content: flex-start;
    padding-top: 6px;
    white-space: normal;
}

.tool .ic-lg {
    margin-bottom: 4px;
}

.tool .caret {
    margin-top: 4px;
}

.w54 {
    width: 54px;
}

.w58 {
    width: 58px;
}

.w60 {
    width: 60px;
}

.w62 {
    width: 62px;
}

.w70 {
    width: 70px;
}

.w78 {
    width: 78px;
}

.w84 {
    width: 84px;
}

.w90 {
    width: 90px;
}

.w98 {
    width: 98px;
}

.w108 {
    width: 108px;
}

.small-grid {
    display: grid;
    grid-template-rows: repeat(3, 31px);
    padding-top: 3px;
}

.cols-1 {
    grid-template-columns: 30px;
}

.cols-2 {
    grid-template-columns: 28px 18px;
}

.cols-edit {
    grid-template-columns: 110px 34px 36px 12px 42px;
}

.small-grid .labeled {
    justify-content: flex-start;
    gap: 6px;
    padding-left: 5px;
}

.small-grid .pressed {
    height: 28px;
    margin-top: 1px;
    border: 1px solid #84c3f0;
    background: #3a5a78;
}

.panel-draw .cols-2 {
    padding-left: 2px;
}

.combo {
    display: flex;
    flex: 1;
    align-items: center;
    height: 26px;
    padding-right: 1px;
    border: 1px solid #343c49;
    background: #4c556a;
}

.combo select {
    flex: 1;
    min-width: 0;
    appearance: none;
}

.combo option {
    background: #4c556a;
}

.swatch {
    width: 20px;
    height: 20px;
    margin: 0 12px 0 13px;
    background: #ffff00;
}

.swatch-sm {
    width: 18px;
    height: 18px;
    margin: 0;
    border: 1px solid #14171c;
}

.layer-tools {
    flex: 1;
    padding: 6px 2px 0 0;
}

.layer-combo {
    flex: none;
    gap: 5px;
    height: 27px;
    padding-left: 3px;
}

.layer-grid {
    display: grid;
    grid-template-columns: repeat(5, 30px);
    grid-auto-rows: 31px;
}

.layer-grid button {
    justify-content: flex-start;
    padding-left: 1px;
}

.prop-rows {
    display: flex;
    flex: 1;
    flex-direction: column;
    gap: 4px;
    padding: 7px 2px 0 0;
}

.prop-row {
    display: flex;
    align-items: center;
    gap: 4px;
}

.line-sample {
    width: 80px;
    height: 1px;
    margin: 0 2px 0 3px;
    background: #e8eaee;
}

.line-sample.thick {
    height: 6px;
    background: #f5f6f9;
}

.panel-props .panel-title {
    position: relative;
    padding-right: 16px;
}

.launcher {
    position: absolute;
    right: 4px;
    bottom: 4px;
}

/* File tabs */
.file-tabs {
    display: flex;
    flex: none;
    align-items: flex-end;
    height: 38px;
    padding-left: 14px;
    border-bottom: 5px solid #3b424d;
}

.file-tab {
    display: flex;
    align-items: center;
    justify-content: flex-start;
    width: 166px;
    height: 27px;
    padding: 2px 0 0 25px;
    background: #2d3541;
    clip-path: polygon(0 100%, 6px 86%, 12px 20%, 18px 0, 150px 0, 156px 20%, 162px 86%, 100% 100%);
    color: #a5aab2;
}

.file-tab.active {
    justify-content: space-between;
    width: 178px;
    padding: 2px 40px 0 13px;
    background: #3b4352;
    clip-path: polygon(0 100%, 2px 20%, 8px 0, 150px 0, 156px 20%, 166px 86%, 100% 100%);
    color: #e6e8eb;
}

.add-tab {
    width: 24px;
    height: 19px;
    margin: 0 0 3px -14px;
    border-radius: 4px;
    background: #303743;
    color: #a5aab2;
}

/* Drawing area */
.canvas {
    position: relative;
    flex: 1;
    min-height: 0;
    background: #21272e;
}

.view-label {
    padding: 6px 2px;
    color: #f1f2f3;
}

.drawing {
    position: absolute;
    top: 263px;
    left: 594px;
}

.crosshair {
    position: absolute;
    right: 142px;
    bottom: 122px;
}

.ucs {
    position: absolute;
    bottom: 12px;
    left: 12px;
}

.viewcube {
    position: absolute;
    top: 23px;
    right: 35px;
    display: flex;
    flex-direction: column;
    align-items: center;
    gap: 28px;
}

.compass {
    display: grid;
    grid-template-columns: 14px 56px 14px;
    grid-template-rows: 14px 56px 14px;
    align-content: space-between;
    justify-content: space-between;
    place-items: center;
    width: 130px;
    height: 130px;
    border: 14px solid #41474f;
    border-radius: 50%;
    color: #aeb2b7;
    font-size: 22px;
    line-height: 14px;
}

.north {
    grid-area: 1 / 2;
    margin-top: -32px;
}

.south {
    grid-area: 3 / 2;
    margin-bottom: -32px;
}

.west {
    grid-area: 2 / 1;
    margin-left: -32px;
}

.east {
    grid-area: 2 / 3;
    margin-right: -32px;
}

.cube-face {
    grid-area: 2 / 2;
    width: 56px;
    height: 56px;
    background: #adafb3;
    color: #3d434b;
    font-size: 14px;
}

.wcs {
    gap: 6px;
    width: 56px;
    height: 21px;
    border: 1px solid #b0b3b8;
    border-radius: 5px;
    background: #92969c;
    color: #41464e;
    font-size: 12px;
}

.navbar {
    position: absolute;
    top: 233px;
    right: 15px;
    border-radius: 4px;
    background: #5a5f65;
}

.scroll-edge {
    position: absolute;
    top: 0;
    right: 0;
    bottom: 0;
    width: 11px;
    border-right: 3px solid #0b1017;
    background: linear-gradient(#b3cdec, #d3e6f8 88px, #b3cdec 94px);
}

.command-line {
    position: absolute;
    right: 384px;
    bottom: 1px;
    left: 383px;
    display: flex;
    height: 32px;
}

.command-handle {
    display: flex;
    align-items: center;
    gap: 8px;
    width: 70px;
    padding-left: 4px;
    background: #282e38;
    color: #c3c6ca;
}

.command-handle button + button {
    margin-left: 6px;
}

.command-box {
    display: flex;
    flex: 1;
    align-items: center;
    border-radius: 2px;
    background: #bcbdbe;
    color: #33363a;
}

.recent {
    gap: 2px;
    padding: 0 8px 0 5px;
}

.command-box input {
    flex: 1;
    font-family: "DejaVu Sans Mono", "Liberation Mono", monospace;
    font-size: 15px;
    font-style: italic;
}

.command-box input::placeholder {
    color: #55585d;
    opacity: 1;
}

.history {
    width: 22px;
    height: 30px;
}

/* Layout tabs and status bar */
.footer {
    display: flex;
    flex: none;
    justify-content: space-between;
    height: 36px;
    border-top: 1px solid #3d4450;
}

.layout-tabs {
    display: flex;
    padding-left: 10px;
}

.layout-tab {
    height: 22px;
    padding: 0 14px;
    background: #2c333f;
    clip-path: polygon(0 0, 100% 0, calc(100% - 8px) 88%, calc(100% - 12px) 100%, 12px 100%, 8px 88%);
    color: #a5aab2;
}

.layout-tab.active {
    padding: 0 19px;
    background: #3b4459;
    color: #f4f5f7;
    font-weight: bold;
}

.layout-add {
    margin-left: 4px;
    padding: 0 10px;
}

.status {
    display: flex;
    gap: 3px;
    height: 34px;
    padding: 2px 1px 3px;
}

.status-group {
    display: flex;
    background: #3b4352;
}

.status-group button {
    width: 30px;
}

.status-group .drop {
    width: 18px;
}

.status-group .status-model {
    width: 71px;
    font-size: 15px;
}

.status-group .scale {
    gap: 4px;
    width: 42px;
}

.status-group .on {
    border: 1px solid #3b4352;
    background: #5b8cc5;
}

.status-last-tool {
    margin-right: 8px;
}
```
